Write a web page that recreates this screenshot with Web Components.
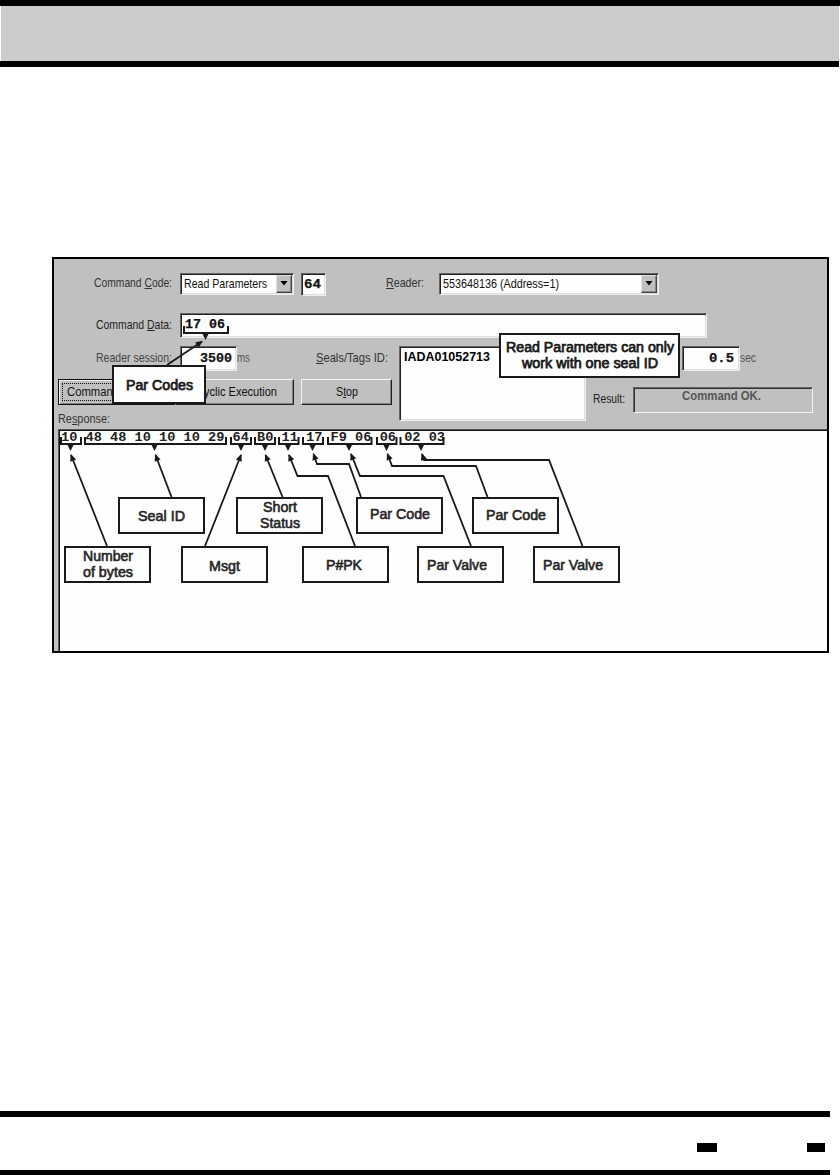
<!DOCTYPE html>
<html lang="en">
<head>
<meta charset="utf-8">
<title>Read Parameters</title>
<style>
html,body{margin:0;background:#fff}
body{width:840px;height:1175px;overflow:hidden;font-family:"Liberation Sans",Arial,sans-serif;font-size:13px;color:#111}
</style>
</head>
<body>
<manual-page></manual-page>
<script>
const define = (name, html, setup) => customElements.define(name, class extends HTMLElement {
  connectedCallback() {
    if (this.shadowRoot) return;
    this.attachShadow({mode: 'open'}).innerHTML = html;
    if (setup) setup(this, this.shadowRoot);
  }
});

define('manual-page', `
<style>
:host{display:flex;flex-direction:column;width:840px;height:1175px}
header{height:55px;margin:0 1px;background:#ccc}
.bar{height:6px;background:#000;flex:none}
.b2{width:839px}
figure{margin:190px 0 0 52px;width:777px;height:396px;flex:none}
footer{margin-top:auto;width:830px;height:64px;display:flex;flex-direction:column}
.marks{height:53px;display:flex;justify-content:flex-end;padding-right:5px;box-sizing:border-box;align-items:flex-start;gap:90px}
.marks i{background:#000;height:9px;width:20px;margin-top:26px}
.marks i+i{width:18px}
.last{height:5px}
</style>
<div class="bar"></div><header></header><div class="bar b2"></div>
<figure><reader-window></reader-window></figure>
<footer><div class="bar"></div><div class="marks"><i></i><i></i></div><div class="bar last"></div></footer>`);

define('reader-window', `
<style>
:host{display:flex;flex-direction:column;position:relative;box-sizing:border-box;width:777px;height:396px;border:2px solid #000;background:#c0c0c0}
.row{display:flex;align-items:center}
.r1{margin-top:14px;height:22px}
.r2{margin-top:18px;height:25px}
.block{display:flex;margin-top:8px;height:83px}
.left{width:345px;display:flex;flex-direction:column}
.session,.delay{height:25px}
.buttons{margin-top:8px;height:26px}
.right{flex:1}
.result{margin-top:16px;height:26px}
.resp{margin:6px 0 0 4px}
.list{height:75px}
.response{flex:1;margin-left:4px;box-sizing:border-box;border:solid #555;border-width:1px 0 0 1px}
.response div{height:100%;box-sizing:border-box;background:#fefefe;border:solid #111;border-width:1px 0 0 1px;padding:0 0 0 1px}
.mono{font-family:"Liberation Mono",monospace;font-weight:700;font-size:13.5px;color:#111;-webkit-text-stroke:.25px #111}
</style>
<div class="row r1">
 <fit-text w="78" style="margin-left:40px;color:#333;top:-1px">Command <u>C</u>ode:</fit-text>
 <win-field w="114" h="22" arrow style="margin-left:8px"><fit-text w="83" style="margin-left:2px">Read Parameters</fit-text></win-field>
 <win-field w="25" h="23" style="margin-left:7px"><fit-text class="mono" w="17" style="margin-left:1px;top:1px">64</fit-text></win-field>
 <fit-text w="38" style="margin-left:60px;color:#333;top:-1px"><u>R</u>eader:</fit-text>
 <win-field w="220" h="22" arrow style="margin-left:15px"><fit-text w="116" style="margin-left:2px">553648136 (Address=1)</fit-text></win-field>
</div>
<div class="row r2">
 <fit-text w="76" style="margin-left:42px;color:#222;top:-1px">Command <u>D</u>ata:</fit-text>
 <win-field w="527" h="25" style="margin-left:8px"><fit-text class="mono" w="40" style="margin-left:3px;top:-1px">17 06</fit-text></win-field>
</div>
<div class="block">
 <div class="left">
  <div class="row session">
   <fit-text w="76" style="margin-left:42px;color:#444;top:-1px">Reader session:</fit-text>
   <win-field w="57" h="25" style="margin-left:8px"><fit-text class="mono" w="32" style="margin-left:18px">3500</fit-text></win-field>
   <fit-text w="13" style="color:#555;top:-1px">ms</fit-text>
   <fit-text w="72" style="margin-left:66px;color:#333;top:-1px"><u>S</u>eals/Tags ID:</fit-text>
  </div>
  <div class="row buttons">
   <win-button w="117" focus style="margin-left:4px"><fit-text w="52" style="margin-right:48px">Command</fit-text></win-button>
   <win-button w="119"><fit-text w="73" style="margin-left:11px">yclic Execution</fit-text></win-button>
   <win-button w="91" style="margin-left:7px"><fit-text w="22">S<u>t</u>op</fit-text></win-button>
  </div>
  <fit-text class="resp" w="52" style="color:#333">Re<u>s</u>ponse:</fit-text>
 </div>
 <win-field class="list" w="187" h="75" top><fit-text w="86" style="margin:1px 0 0 3px;font-weight:700;color:#000">IADA01052713</fit-text></win-field>
 <div class="right">
  <div class="row delay">
   <win-field w="58" h="25" style="margin-left:96px"><fit-text class="mono" w="25" style="margin-left:25px">0.5</fit-text></win-field>
   <fit-text w="16" style="color:#555;top:-1px">sec</fit-text>
  </div>
  <div class="row result">
   <fit-text w="32" style="margin-left:7px;color:#222;top:-1px">Result:</fit-text>
   <win-field w="180" h="26" flat style="margin-left:8px"><fit-text w="79" style="margin-left:47px;top:-4px;font-weight:700;color:#555">Command OK.</fit-text></win-field>
  </div>
 </div>
</div>
<div class="response"><div><fit-text class="mono" w="384" style="font-weight:700;color:#222;-webkit-text-stroke:0;top:-1px">10 48 48 10 10 10 29 64 B0 11 17 F9 06 06 02 03</fit-text></div></div>
<call-lines></call-lines>
<call-box x="112" y="365" w="94" h="39" strong><fit-text w="67">Par Codes</fit-text></call-box>
<call-box x="499" y="333" w="181" h="45" strong><fit-text w="168" style="top:-1px">Read Parameters can only</fit-text><fit-text w="136" style="top:-1px">work with one seal ID</fit-text></call-box>
<call-box x="118" y="497" w="87" h="37"><fit-text w="47">Seal ID</fit-text></call-box>
<call-box x="236" y="497" w="87" h="37"><fit-text w="34" style="top:-1px">Short</fit-text><fit-text w="40" style="top:-1px">Status</fit-text></call-box>
<call-box x="356" y="497" w="87" h="37"><fit-text w="60" style="top:-2px">Par Code</fit-text></call-box>
<call-box x="472" y="497" w="87" h="37"><fit-text w="60" style="top:-1px">Par Code</fit-text></call-box>
<call-box x="64" y="546" w="87" h="37"><fit-text w="50" style="top:-1px">Number</fit-text><fit-text w="50" style="top:-1px">of bytes</fit-text></call-box>
<call-box x="181" y="546" w="87" h="37"><fit-text w="31" style="top:1px">Msgt</fit-text></call-box>
<call-box x="302" y="546" w="87" h="37"><fit-text w="36" style="left:-2px">P#PK</fit-text></call-box>
<call-box x="417" y="546" w="87" h="37"><fit-text w="60" style="left:-4px">Par Valve</fit-text></call-box>
<call-box x="533" y="546" w="87" h="37"><fit-text w="60" style="left:-4px">Par Valve</fit-text></call-box>`);

// Sunken edit field; "arrow" adds the drop-down button.
define('win-field', `
<style>
:host{display:flex;flex:none;box-sizing:border-box;align-items:center;background:#fefefe;border:1px solid;border-color:#666 #eee #eee #666;box-shadow:inset 1px 1px #222,inset -1px -1px #dedede;padding:1px}
:host([top]){align-items:flex-start}
:host([flat]){background:#c0c0c0;box-shadow:inset 1px 1px #333;border-color:#666 #f2f2f2 #f2f2f2 #666}
.btn{display:none;margin-left:auto;width:16px;align-self:stretch;box-sizing:border-box;background:#c0c0c0;border:1px solid;border-color:#e0e0e0 #444 #444 #e0e0e0;box-shadow:inset -1px -1px #888}
:host([arrow]) .btn{display:block}
svg{display:block;margin:4px auto 0 3px}
</style><slot></slot><div class="btn"><svg width="8" height="6"><path d="M0.5 1H7.5L4 5.5Z"/></svg></div>`,
el => { el.style.width = el.getAttribute('w') + 'px'; el.style.height = el.getAttribute('h') + 'px'; });

define('win-button', `
<style>
:host{display:flex;flex:none;box-sizing:border-box;height:26px;align-items:center;justify-content:center;background:#c0c0c0;border:1px solid;border-color:#f4f4f4 #222 #222 #f4f4f4;box-shadow:inset -1px -1px #808080;position:relative}
:host([focus]){border-color:#111;box-shadow:inset 1px 1px #eee,inset -1px -1px #808080}
.dots{display:none;position:absolute;inset:3px;border:1px dotted #111}
:host([focus]) .dots{display:block}
</style><div class="dots"></div><slot></slot>`,
el => { el.style.width = el.getAttribute('w') + 'px'; });

// Annotation box over the window; x and y are page coordinates.
define('call-box', `
<style>
:host{position:absolute;display:flex;flex-direction:column;box-sizing:border-box;align-items:center;justify-content:center;background:#fefefe;border:2px solid #1a1a1a;font-size:14px;color:#262626;-webkit-text-stroke:.6px #262626}
:host([strong]){color:#1a1a1a;-webkit-text-stroke:.75px #1a1a1a}
</style><slot></slot>`,
el => {
  const n = a => +el.getAttribute(a);
  el.style.cssText = `left:${n('x') - 54}px;top:${n('y') - 259}px;width:${n('w')}px;height:${n('h')}px`;
});

define('call-lines', `
<style>:host{position:absolute;left:0;top:0;width:773px;height:392px}svg{display:block}</style>
<svg width="773" height="392" viewBox="54 259 773 392" fill="none" stroke="#1a1a1a"></svg>`,
(el, root) => {
  let out = '';
  for (const [a, b, y, c] of [[184,228,333,205.5],[61,81,444,70.5],[85,226,444,154.5],[231,251,444,241],[255,275,444,265],[279,298.5,444,288],[303,323,444,312.5],[328,371.5,444,349],[377,396.5,444,386.5],[400.5,443.5,444,421]])
    out += `<path stroke-width="2" d="M${a} ${y-7}V${y}H${b}V${y-7}"/><path stroke="none" fill="#1a1a1a" d="M${c-3.5} ${y}H${c+3.5}L${c} ${y+7}Z"/>`;
  for (const p of [[167,365,202,341.5],[107,546,71,455],[171.5,497,155.5,455],[205,546,241,455],[282.5,497,265.5,455],[355,546,328,476,297.5,476,289,455],[361,497,349,464,317,464,313.5,454],[471,546,443.5,476,360,476,351,454],[487.5,497,476,466,392,466,387.5,454],[582.5,546,549,460,424,460,422,454]]) {
    const [x0, y0, x, y] = p.slice(-4), t = Math.atan2(y - y0, x - x0) * 180 / Math.PI;
    out += `<polyline stroke-width="1.8" points="${p.join(' ')}"/><path stroke="none" fill="#1a1a1a" transform="translate(${x} ${y}) rotate(${t})" d="M1 0L-6 -3.2V3.2Z"/>`;
  }
  root.querySelector('svg').innerHTML = out;
});

// One line of text condensed or widened to the width in "w".
define('fit-text', `
<style>
:host{display:block;flex:none;position:relative;height:16px;line-height:16px;white-space:nowrap}
span{display:inline-block;transform-origin:0 0}
</style><span><slot></slot></span>`,
(el, root) => {
  const w = +el.getAttribute('w'), s = root.querySelector('span');
  el.style.width = w + 'px';
  s.style.transform = `scaleX(${w / s.getBoundingClientRect().width})`;
});
</script>
</body>
</html>
